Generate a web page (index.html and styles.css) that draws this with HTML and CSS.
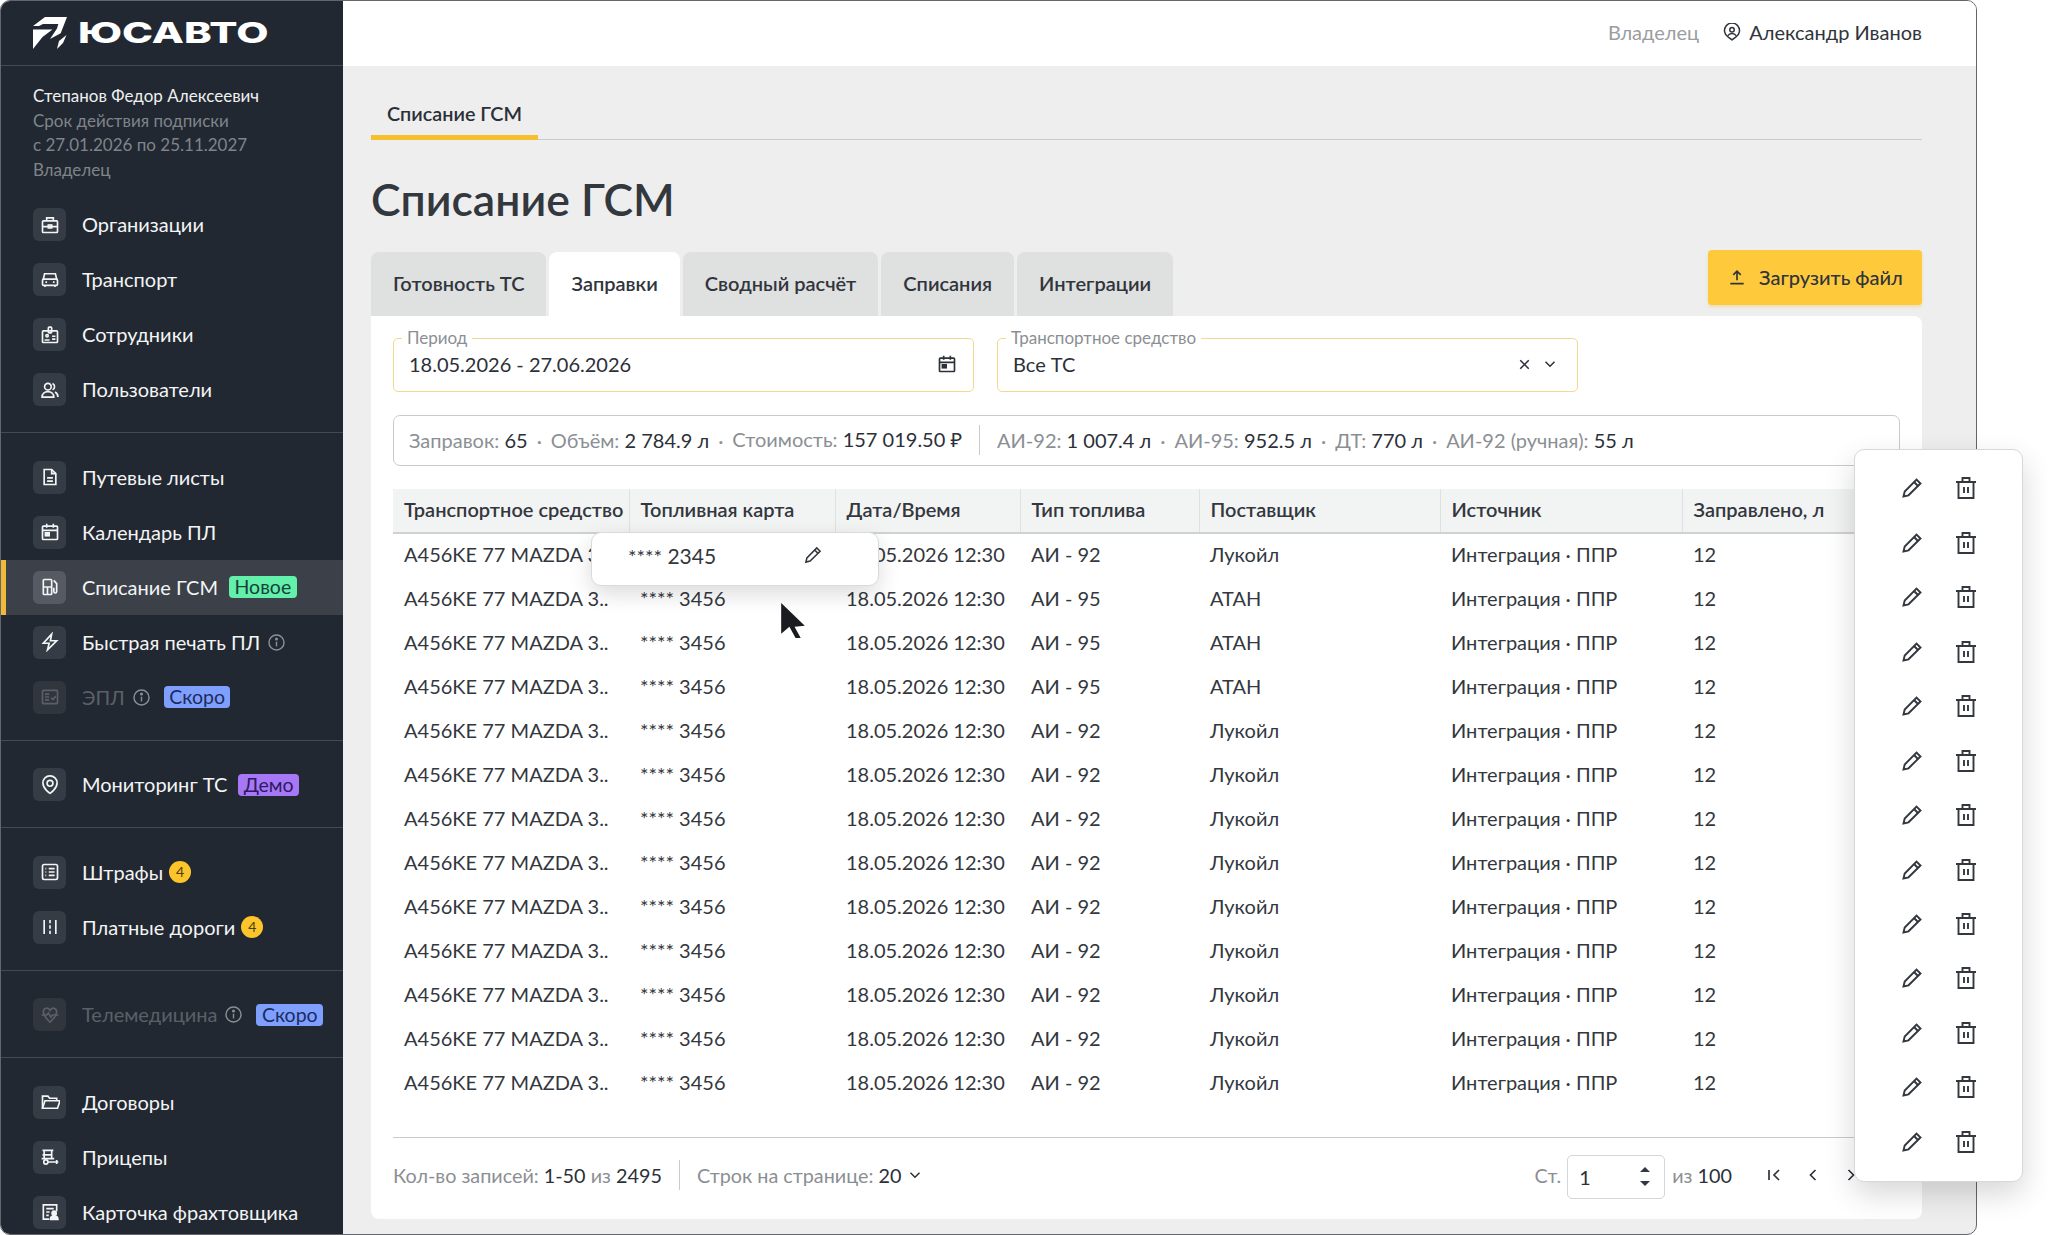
FILE: index.html
```html
<!DOCTYPE html>
<html lang="ru">
<head>
<meta charset="utf-8">
<title>Списание ГСМ</title>
<link rel="stylesheet" href="styles.css">
</head>
<body>
<svg class="sprite" xmlns="http://www.w3.org/2000/svg">
  <symbol id="i-brief" viewBox="0 0 24 24"><rect x="3" y="7" width="18" height="14" rx="1"/><path d="M8 7V3.500h8V7M3 14h18"/><rect x="10" y="12" width="4" height="3.500"/></symbol>
  <symbol id="i-car" viewBox="0 0 24 24"><path d="M4 11l1.500-6.500h13L20 11"/><rect x="3" y="11" width="18" height="7.500" rx="1.500"/><path d="M6 18.500v2M18 18.500v2M6.500 14.500h2M15.500 14.500h2"/></symbol>
  <symbol id="i-badge" viewBox="0 0 24 24"><rect x="3" y="7" width="18" height="14" rx="1"/><rect x="10" y="2.500" width="4" height="7" rx="1"/><circle cx="8.500" cy="13" r="1.400"/><path d="M5.500 18h6M14.500 13.500h4M14.500 17h4"/></symbol>
  <symbol id="i-users" viewBox="0 0 24 24"><circle cx="9.500" cy="8" r="4"/><path d="M2.500 20.500c0-4 3-6.500 7-6.500s7 2.500 7 6.500z"/><path d="M15 4.300a4 4 0 0 1 0 7.400M18 14.500c2 1 3.500 3 3.500 6"/></symbol>
  <symbol id="i-doc" viewBox="0 0 24 24"><path d="M5 3h9l5 5v13H5z"/><path d="M14 3v5h5M8.500 13h7M8.500 17h7"/></symbol>
  <symbol id="i-cal" viewBox="0 0 24 24"><rect x="3" y="5" width="18" height="16" rx="1"/><path d="M3 10h18M8 2v5M16 2v5"/><rect class="solid" x="6.500" y="13" width="4.500" height="3.500"/></symbol>
  <symbol id="i-fuel" viewBox="0 0 24 24"><rect x="4" y="3" width="10" height="18" rx="1"/><path d="M4 12h10M9 12v9M16.500 4l3.500 4v9.500a1.700 1.700 0 0 1-3.400 0V13"/></symbol>
  <symbol id="i-bolt" viewBox="0 0 24 24"><path d="M14 2.500L4 13.500h7l-2 8 11-11h-7.500z"/></symbol>
  <symbol id="i-epl" viewBox="0 0 24 24"><rect x="3" y="4" width="18" height="16" rx="1"/><path d="M6 8.500h5M6 12h5M6 15.500h5M13.500 13l2 2 3.500-4"/></symbol>
  <symbol id="i-pin" viewBox="0 0 24 24"><path d="M12 22s8.500-5.500 8.500-12.500a8.500 8.500 0 1 0-17 0C3.500 16.500 12 22 12 22z"/><circle cx="12" cy="10" r="3.500"/></symbol>
  <symbol id="i-list" viewBox="0 0 24 24"><rect x="3" y="3" width="18" height="18" rx="2"/><path d="M10.500 8h7M10.500 12h7M10.500 16h7M6.500 8h1M6.500 12h1M6.500 16h1"/></symbol>
  <symbol id="i-road" viewBox="0 0 24 24"><path d="M5 3.500v17M19 3.500v17M12 3.500v4M12 10v4M12 16.500v4"/></symbol>
  <symbol id="i-heart" viewBox="0 0 24 24"><path d="M4 8.500C4 3 10 2.500 12 6.500c2-4 8-3.500 8 2 0 5-5 9-8 12-3-3-8-7-8-12z"/><path d="M2 12h6l2-2.500 3 5 2-2.500h7"/></symbol>
  <symbol id="i-folder" viewBox="0 0 24 24"><path d="M3 19.500V5h6.500l2 2.500H20v3"/><path d="M3 19.500l3-9h18l-3 9z"/></symbol>
  <symbol id="i-trailer" viewBox="0 0 24 24"><path d="M3 4h13M5 4v10M14 4v10M3 9.500h12M2 14h15"/><circle cx="7" cy="18" r="2.500"/><path d="M9.500 18H22M20 15.500v5"/></symbol>
  <symbol id="i-carrier" viewBox="0 0 24 24"><path d="M20 11V3.500H4v17h7"/><path d="M7.500 8h9M7.500 12h4M7.500 16h3"/><circle class="solid" cx="17" cy="13.500" r="2.500"/><path class="solid" d="M12.500 21c0-2.500 2-4 4.500-4s4.500 1.500 4.500 4z"/></symbol>
  <symbol id="i-info" viewBox="0 0 24 24"><circle cx="12" cy="12" r="9.500"/><path d="M12 11v6"/><circle class="solid" cx="12" cy="7.500" r="1"/></symbol>
  <symbol id="i-edit" viewBox="0 0 24 24"><path d="M3.500 20.500l1.200-5L16.500 3.500l4 4L8.500 19.300z"/><path d="M14 6l4 4"/></symbol>
  <symbol id="i-trash" viewBox="0 0 24 24"><path d="M2 6h20M8.500 6V2h7v4M4.500 6v16h15V6M10 11v6M14 11v6"/></symbol>
  <symbol id="i-upload" viewBox="0 0 24 24"><path d="M12 16V5M7.500 9.500L12 5l4.500 4.500M4 20h16"/></symbol>
  <symbol id="i-user" viewBox="0 0 24 24"><path d="M12 22.500s-3-2.500-5-3.800a10 10 0 1 1 10 0c-2 1.300-5 3.800-5 3.800z"/><circle cx="12" cy="9" r="3"/><path d="M6.500 17c1-2 3-3 5.500-3s4.500 1 5.500 3"/></symbol>
  <symbol id="i-x" viewBox="0 0 24 24"><path d="M6 6l12 12M18 6L6 18"/></symbol>
  <symbol id="i-down" viewBox="0 0 24 24"><path d="M6 9l6 6 6-6"/></symbol>
  <symbol id="i-left" viewBox="0 0 24 24"><path d="M15 6l-6 6 6 6"/></symbol>
  <symbol id="i-right" viewBox="0 0 24 24"><path d="M9 6l6 6-6 6"/></symbol>
  <symbol id="i-first" viewBox="0 0 24 24"><path d="M6 6v12M18 6l-6 6 6 6"/></symbol>
</svg>

<div class="screen">
  <div class="frame">
    <aside class="sidebar">
      <div class="brand">
        <svg class="brand-mark" viewBox="0 0 34 33"><path d="M0 10L12 1h22l-6.300 16.300L17 23l7-10.500 1.300-4.500H10l-4 2z"/><path d="M0 13.500h19.500l-10 7.500L0 33z"/><path d="M33.500 19L30 27l-6 6 2-8z"/></svg>
        <span class="brand-name">ЮСАВТО</span>
      </div>
      <div class="account">
        <div class="account-name">Степанов Федор Алексеевич</div>
        <div>Срок действия подписки</div>
        <div>с 27.01.2026 по 25.11.2027</div>
        <div>Владелец</div>
      </div>
      <nav class="nav-group nav-first">
        <a class="nav-item"><span class="nav-icon"><svg class="ico"><use href="#i-brief"/></svg></span><span class="nav-label">Организации</span></a>
        <a class="nav-item"><span class="nav-icon"><svg class="ico"><use href="#i-car"/></svg></span><span class="nav-label">Транспорт</span></a>
        <a class="nav-item"><span class="nav-icon"><svg class="ico"><use href="#i-badge"/></svg></span><span class="nav-label">Сотрудники</span></a>
        <a class="nav-item"><span class="nav-icon"><svg class="ico"><use href="#i-users"/></svg></span><span class="nav-label">Пользователи</span></a>
      </nav>
      <nav class="nav-group">
        <a class="nav-item"><span class="nav-icon"><svg class="ico"><use href="#i-doc"/></svg></span><span class="nav-label">Путевые листы</span></a>
        <a class="nav-item"><span class="nav-icon"><svg class="ico"><use href="#i-cal"/></svg></span><span class="nav-label">Календарь ПЛ</span></a>
        <a class="nav-item active"><span class="nav-icon"><svg class="ico"><use href="#i-fuel"/></svg></span><span class="nav-label">Списание ГСМ</span><span class="tag tag-new">Новое</span></a>
        <a class="nav-item"><span class="nav-icon"><svg class="ico"><use href="#i-bolt"/></svg></span><span class="nav-label">Быстрая печать ПЛ</span><svg class="ico info"><use href="#i-info"/></svg></a>
        <a class="nav-item disabled"><span class="nav-icon"><svg class="ico"><use href="#i-epl"/></svg></span><span class="nav-label">ЭПЛ</span><svg class="ico info"><use href="#i-info"/></svg><span class="tag tag-soon">Скоро</span></a>
      </nav>
      <nav class="nav-group">
        <a class="nav-item"><span class="nav-icon"><svg class="ico"><use href="#i-pin"/></svg></span><span class="nav-label">Мониторинг ТС</span><span class="tag tag-demo">Демо</span></a>
      </nav>
      <nav class="nav-group">
        <a class="nav-item"><span class="nav-icon"><svg class="ico"><use href="#i-list"/></svg></span><span class="nav-label">Штрафы</span><span class="count">4</span></a>
        <a class="nav-item"><span class="nav-icon"><svg class="ico"><use href="#i-road"/></svg></span><span class="nav-label">Платные дороги</span><span class="count">4</span></a>
      </nav>
      <nav class="nav-group">
        <a class="nav-item disabled"><span class="nav-icon"><svg class="ico"><use href="#i-heart"/></svg></span><span class="nav-label">Телемедицина</span><svg class="ico info"><use href="#i-info"/></svg><span class="tag tag-soon">Скоро</span></a>
      </nav>
      <nav class="nav-group nav-last">
        <a class="nav-item"><span class="nav-icon"><svg class="ico"><use href="#i-folder"/></svg></span><span class="nav-label">Договоры</span></a>
        <a class="nav-item"><span class="nav-icon"><svg class="ico"><use href="#i-trailer"/></svg></span><span class="nav-label">Прицепы</span></a>
        <a class="nav-item"><span class="nav-icon"><svg class="ico"><use href="#i-carrier"/></svg></span><span class="nav-label">Карточка фрахтовщика</span></a>
      </nav>
    </aside>

    <div class="main">
      <header class="topbar">
        <span class="role">Владелец</span>
        <span class="user"><svg class="ico user-ico"><use href="#i-user"/></svg>Александр Иванов</span>
      </header>
      <div class="content">
        <div class="crumbs"><span class="crumb">Списание ГСМ</span></div>
        <h1 class="title">Списание ГСМ</h1>
        <div class="tabbar">
          <div class="tabs">
            <span class="tab">Готовность ТС</span>
            <span class="tab tab-active">Заправки</span>
            <span class="tab">Сводный расчёт</span>
            <span class="tab">Списания</span>
            <span class="tab">Интеграции</span>
          </div>
          <button class="upload"><svg class="ico"><use href="#i-upload"/></svg>Загрузить файл</button>
        </div>
        <section class="card">
          <div class="filters">
            <div class="field">
              <span class="field-label">Период</span>
              <span class="field-value">18.05.2026 - 27.06.2026</span>
              <svg class="ico field-ico"><use href="#i-cal"/></svg>
            </div>
            <div class="field">
              <span class="field-label">Транспортное средство</span>
              <span class="field-value">Все ТС</span>
              <svg class="ico field-x"><use href="#i-x"/></svg>
              <svg class="ico field-down"><use href="#i-down"/></svg>
            </div>
          </div>
          <div class="summary">
            <span class="stat"><i>Заправок:</i> 65</span><span class="dot">·</span>
            <span class="stat"><i>Объём:</i> 2 784.9 л</span><span class="dot">·</span>
            <span class="stat"><i>Стоимость:</i> 157 019.50 ₽</span><span class="sep"></span>
            <span class="stat"><i>АИ-92:</i> 1 007.4 л</span><span class="dot">·</span>
            <span class="stat"><i>АИ-95:</i> 952.5 л</span><span class="dot">·</span>
            <span class="stat"><i>ДТ:</i> 770 л</span><span class="dot">·</span>
            <span class="stat"><i>АИ-92 (ручная):</i> 55 л</span>
          </div>
          <table class="grid">
            <colgroup><col class="c1"><col class="c2"><col class="c3"><col class="c4"><col class="c5"><col class="c6"><col class="c7"></colgroup>
            <thead><tr><th>Транспортное средство</th><th>Топливная карта</th><th>Дата/Время</th><th>Тип топлива</th><th>Поставщик</th><th>Источник</th><th>Заправлено, л</th></tr></thead>
            <tbody>
              <tr><td>A456KE 77 MAZDA 3..</td><td class="hidden-cell"></td><td>18.05.2026 12:30</td><td>АИ - 92</td><td>Лукойл</td><td>Интеграция · ППР</td><td>12</td></tr>
              <tr><td>A456KE 77 MAZDA 3..</td><td>**** 3456</td><td>18.05.2026 12:30</td><td>АИ - 95</td><td>АТАН</td><td>Интеграция · ППР</td><td>12</td></tr>
              <tr><td>A456KE 77 MAZDA 3..</td><td>**** 3456</td><td>18.05.2026 12:30</td><td>АИ - 95</td><td>АТАН</td><td>Интеграция · ППР</td><td>12</td></tr>
              <tr><td>A456KE 77 MAZDA 3..</td><td>**** 3456</td><td>18.05.2026 12:30</td><td>АИ - 95</td><td>АТАН</td><td>Интеграция · ППР</td><td>12</td></tr>
              <tr><td>A456KE 77 MAZDA 3..</td><td>**** 3456</td><td>18.05.2026 12:30</td><td>АИ - 92</td><td>Лукойл</td><td>Интеграция · ППР</td><td>12</td></tr>
              <tr><td>A456KE 77 MAZDA 3..</td><td>**** 3456</td><td>18.05.2026 12:30</td><td>АИ - 92</td><td>Лукойл</td><td>Интеграция · ППР</td><td>12</td></tr>
              <tr><td>A456KE 77 MAZDA 3..</td><td>**** 3456</td><td>18.05.2026 12:30</td><td>АИ - 92</td><td>Лукойл</td><td>Интеграция · ППР</td><td>12</td></tr>
              <tr><td>A456KE 77 MAZDA 3..</td><td>**** 3456</td><td>18.05.2026 12:30</td><td>АИ - 92</td><td>Лукойл</td><td>Интеграция · ППР</td><td>12</td></tr>
              <tr><td>A456KE 77 MAZDA 3..</td><td>**** 3456</td><td>18.05.2026 12:30</td><td>АИ - 92</td><td>Лукойл</td><td>Интеграция · ППР</td><td>12</td></tr>
              <tr><td>A456KE 77 MAZDA 3..</td><td>**** 3456</td><td>18.05.2026 12:30</td><td>АИ - 92</td><td>Лукойл</td><td>Интеграция · ППР</td><td>12</td></tr>
              <tr><td>A456KE 77 MAZDA 3..</td><td>**** 3456</td><td>18.05.2026 12:30</td><td>АИ - 92</td><td>Лукойл</td><td>Интеграция · ППР</td><td>12</td></tr>
              <tr><td>A456KE 77 MAZDA 3..</td><td>**** 3456</td><td>18.05.2026 12:30</td><td>АИ - 92</td><td>Лукойл</td><td>Интеграция · ППР</td><td>12</td></tr>
              <tr><td>A456KE 77 MAZDA 3..</td><td>**** 3456</td><td>18.05.2026 12:30</td><td>АИ - 92</td><td>Лукойл</td><td>Интеграция · ППР</td><td>12</td></tr>
            </tbody>
          </table>
          <footer class="pager">
            <div class="pager-left">
              <span><i>Кол-во записей:</i> 1-50 <i>из</i> 2495</span>
              <span class="pager-sep"></span>
              <span><i>Строк на странице:</i> 20</span>
              <svg class="ico pager-down"><use href="#i-down"/></svg>
            </div>
            <div class="pager-right">
              <i>Ст.</i>
              <span class="page-input">1<span class="spin"><b class="up"></b><b class="dn"></b></span></span>
              <span class="page-total"><i>из</i> 100</span>
              <svg class="ico nav-btn first"><use href="#i-first"/></svg>
              <svg class="ico nav-btn"><use href="#i-left"/></svg>
              <svg class="ico nav-btn"><use href="#i-right"/></svg>
            </div>
          </footer>
        </section>
      </div>
    </div>
  </div>

  <div class="cell-pop">
    <span class="cell-pop-text"><small>****</small> 2345</span>
    <svg class="ico act"><use href="#i-edit"/></svg>
  </div>

  <svg class="cursor" viewBox="0 0 25 36"><path d="M1 1l23 22-10 1 6 11-5 0-6-11-8 7z"/></svg>

  <div class="actions">
    <div class="act-row"><svg class="ico act"><use href="#i-edit"/></svg><svg class="ico act"><use href="#i-trash"/></svg></div>
    <div class="act-row"><svg class="ico act"><use href="#i-edit"/></svg><svg class="ico act"><use href="#i-trash"/></svg></div>
    <div class="act-row"><svg class="ico act"><use href="#i-edit"/></svg><svg class="ico act"><use href="#i-trash"/></svg></div>
    <div class="act-row"><svg class="ico act"><use href="#i-edit"/></svg><svg class="ico act"><use href="#i-trash"/></svg></div>
    <div class="act-row"><svg class="ico act"><use href="#i-edit"/></svg><svg class="ico act"><use href="#i-trash"/></svg></div>
    <div class="act-row"><svg class="ico act"><use href="#i-edit"/></svg><svg class="ico act"><use href="#i-trash"/></svg></div>
    <div class="act-row"><svg class="ico act"><use href="#i-edit"/></svg><svg class="ico act"><use href="#i-trash"/></svg></div>
    <div class="act-row"><svg class="ico act"><use href="#i-edit"/></svg><svg class="ico act"><use href="#i-trash"/></svg></div>
    <div class="act-row"><svg class="ico act"><use href="#i-edit"/></svg><svg class="ico act"><use href="#i-trash"/></svg></div>
    <div class="act-row"><svg class="ico act"><use href="#i-edit"/></svg><svg class="ico act"><use href="#i-trash"/></svg></div>
    <div class="act-row"><svg class="ico act"><use href="#i-edit"/></svg><svg class="ico act"><use href="#i-trash"/></svg></div>
    <div class="act-row"><svg class="ico act"><use href="#i-edit"/></svg><svg class="ico act"><use href="#i-trash"/></svg></div>
    <div class="act-row"><svg class="ico act"><use href="#i-edit"/></svg><svg class="ico act"><use href="#i-trash"/></svg></div>
  </div>
</div>
</body>
</html>
```
FILE: styles.css
```css
* { box-sizing: border-box; }
html, body { margin: 0; height: 100%; background: #fff; }
body { font-family: "Lato", "Noto Sans", sans-serif; color: #2c3038; font-size: 20px; overflow: hidden; }
i { font-style: normal; color: #8b8f94; }
.sprite { display: none; }
.ico { width: 24px; height: 24px; fill: none; stroke: currentColor; stroke-width: 2; flex: none; }
.solid { fill: currentColor; }

.screen { position: relative; width: 2048px; height: 1235px; }
.frame { display: flex; width: 1977px; height: 1235px; border: 1px solid #63676d; border-radius: 10px; overflow: hidden; background: #eee; }

/* sidebar */
.sidebar { width: 342px; flex: none; background: #222831; color: #f3f4f5; overflow: hidden; }
.brand { height: 65px; display: flex; align-items: center; gap: 11px; padding: 0 0 2px 32px; border-bottom: 1px solid #444a53; }
.brand-mark { width: 34px; height: 33px; fill: #fff; flex: none; }
.brand-name { font-family: "Inter", "Liberation Sans", sans-serif; font-weight: 800; font-size: 29px; line-height: 1; color: #fff; display: inline-block; transform: scaleX(1.44); transform-origin: left center; }
.account { padding: 18px 0 15px 32px; font-size: 17px; line-height: 24.500px; color: #7f848b; }
.account-name { color: #eef0f2; }
.nav-group { padding: 16.500px 0 15px; border-bottom: 1px solid #444a53; }
.nav-first { padding-top: 0; }
.nav-last { border-bottom: 0; padding-bottom: 0; }
.nav-item { height: 55px; display: flex; align-items: center; padding-left: 32px; font-size: 20px; color: #f3f4f5; white-space: nowrap; }
.nav-label { padding-bottom: 1px; }
.nav-icon { width: 33px; height: 33px; border-radius: 6px; background: #363c45; display: flex; align-items: center; justify-content: center; margin-right: 16px; flex: none; }
.nav-icon .ico { width: 20px; height: 20px; }
.nav-item.active { background: #3c4149; box-shadow: inset 5px 0 0 #f0b93a; }
.nav-item.active .nav-icon { background: #565b63; }
.nav-item.disabled { color: #5b6068; }
.nav-item.disabled .nav-icon { background: #30353e; }
.nav-item.disabled .nav-icon .ico { color: #5b6068; }
.info { width: 19px; height: 19px; margin-left: 7px; color: #8b8f96; stroke-width: 1.800; }
.disabled .info { color: #8b8f96; margin-right: 13px; }
.tag { height: 22px; line-height: 21px; border-radius: 4px; padding: 0 5.500px; font-size: 19.500px; margin-left: 11px; }
.tag-new { background: #62f0ab; color: #17403a; }
.tag-soon { background: #7f9fff; color: #1c2b5e; margin-left: 0; }
.tag-demo { background: #a678f6; color: #2d1a62; }
.count { width: 22px; height: 22px; border-radius: 50%; background: #fdc52c; color: #4b3b10; font-size: 14px; line-height: 22px; text-align: center; margin-left: 6px; }

/* main */
.main { flex: 1; min-width: 0; display: flex; flex-direction: column; }
.topbar { height: 65px; flex: none; background: #fff; display: flex; align-items: center; justify-content: flex-end; gap: 24px; padding: 0 54px 3px 0; font-size: 20px; }
.role { color: #9a9da1; }
.user { display: flex; align-items: center; gap: 8px; color: #30343b; }
.user-ico { width: 18px; height: 18px; stroke-width: 2; }
.content { padding: 0 54px 0 28px; }
.crumbs { height: 74px; padding-top: 25px; border-bottom: 1px solid #c9cbcc; display: flex; align-items: flex-end; }
.crumb { height: 49px; line-height: 44px; padding: 0 16px; font-size: 19.800px; font-weight: 600; border-bottom: 5px solid #f5c02e; margin-bottom: -1px; }
.title { margin: 33px 0 0; height: 52px; line-height: 52px; font-size: 44.500px; font-weight: 600; color: #33373e; }
.tabbar { display: flex; justify-content: space-between; margin-top: 25px; height: 66px; }
.tabs { display: flex; gap: 3px; align-self: flex-end; }
.tab { height: 64px; line-height: 62px; padding: 0 22px; background: #dfe0e0; border-radius: 8px 8px 0 0; font-weight: 600; font-size: 20px; color: #31353c; }
.tab-active { background: #fff; }
.upload { width: 214px; height: 55px; padding-bottom: 2px; border: 0; border-radius: 4px; background: #ffc93c; display: flex; align-items: center; justify-content: center; gap: 12px; font: 500 20px "Lato", "Noto Sans", sans-serif; color: #30343b; box-shadow: 0 2px 3px rgba(240, 190, 60, .35); }
.upload .ico { width: 20px; height: 20px; }
.card { background: #fff; border-radius: 0 8px 8px 8px; height: 903px; padding: 22px 22px 0; }

.filters { display: flex; gap: 23px; }
.field { position: relative; width: 581px; height: 54px; border: 1.500px solid #f3d98f; border-radius: 5px; display: flex; align-items: center; padding: 0 0 2px 15px; font-size: 20px; }
.field-value { flex: 1; }
.field-label { position: absolute; left: 8px; top: -10px; background: #fff; padding: 0 5px; font-size: 17px; line-height: 18px; color: #8b8f94; }
.field-ico { width: 20px; height: 20px; margin-right: 16px; }
.field-x { width: 17px; height: 17px; margin-right: 8px; stroke-width: 2.200; }
.field-down { width: 18px; height: 18px; margin-right: 18px; }

.summary { margin-top: 23px; width: 1507px; height: 51px; border: 1.500px solid #c8cacb; border-radius: 7px; display: flex; align-items: center; padding: 0 0 2px 15px; font-size: 20px; white-space: pre; }
.dot { color: #8b8f94; margin: 0 9px; }
.sep { width: 1px; height: 30px; background: #c8cacb; margin: 0 17px 0 17px; }

.grid { margin-top: 23px; width: 1507px; border-collapse: collapse; table-layout: fixed; }
.c1 { width: 236px; } .c2 { width: 206px; } .c3 { width: 185px; } .c4 { width: 179px; } .c5 { width: 241px; } .c6 { width: 242px; } .c7 { width: 218px; }
.grid th { height: 44px; background: #f2f3f3; border-bottom: 2px solid #cfd1d2; border-right: 1px solid #dfe0e1; text-align: left; font-weight: 600; font-size: 20px; padding: 0 0 3px 11px; white-space: nowrap; overflow: hidden; color: #33373e; }
.grid td { height: 44px; padding: 0 0 3px 11px; font-size: 20px; white-space: nowrap; overflow: hidden; color: #33373e; }

.pager { margin-top: 32px; width: 1507px; height: 78px; padding-bottom: 4px; border-top: 1.500px solid #c8cacb; display: flex; justify-content: space-between; align-items: center; font-size: 19.800px; }
.pager-left, .pager-right { display: flex; align-items: center; }
.pager-sep { width: 1px; height: 30px; background: #c8cacb; margin: 0 17px; }
.pager-down { width: 18px; height: 18px; margin-left: 5px; }
.pager-right { padding-right: 21px; }
.page-input { width: 98px; height: 44px; border: 1.500px solid #d4d6d7; border-radius: 5px; margin: 4px 7px 0 6px; display: flex; align-items: center; justify-content: space-between; padding: 0 14px 0 11px; }
.spin { display: flex; flex-direction: column; gap: 9px; }
.spin b { display: block; width: 0; height: 0; border-left: 5px solid transparent; border-right: 5px solid transparent; }
.spin .up { border-bottom: 5px solid #33373e; }
.spin .dn { border-top: 5px solid #33373e; }
.page-total { margin-right: 32px; }
.nav-btn { width: 20px; height: 20px; margin-right: 18px; }
.nav-btn.first { margin-right: 19px; }

/* overlays */
.cell-pop { position: absolute; left: 591px; top: 532px; width: 288px; height: 54px; background: #fff; border: 1px solid #d9dadb; border-radius: 10px; box-shadow: 0 8px 22px rgba(0, 0, 0, .14); display: flex; align-items: center; justify-content: space-between; padding: 0 55px 8px 36px; font-size: 21px; color: #33373e; }
.cell-pop-text small { font-size: 20px; }
.cursor { position: absolute; left: 780px; top: 602px; width: 26px; height: 37px; fill: #1a1c20; }
.actions { position: absolute; left: 1854px; top: 449px; width: 169px; height: 733px; padding: 11px 0 12px; background: #fff; border: 1px solid #d6d8d9; border-radius: 10px; box-shadow: 0 12px 30px rgba(0, 0, 0, .16); display: flex; flex-direction: column; }
.act-row { height: 54.600px; display: flex; align-items: center; justify-content: center; gap: 30px; color: #33373e; }
.act { width: 24px; height: 24px; stroke-width: 1.900; }
.cell-pop .act { width: 20px; height: 20px; }
```
